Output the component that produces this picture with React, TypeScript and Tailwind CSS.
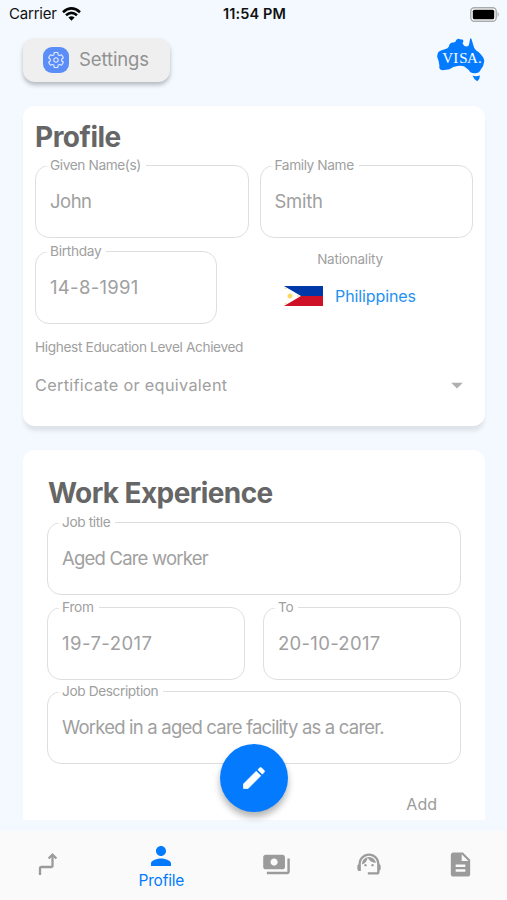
import type { ReactNode } from 'react';
import { MdArrowDropDown, MdDescription, MdPayments, MdPerson, MdSupportAgent } from 'react-icons/md';
import { IoSettingsOutline } from 'react-icons/io5';

type FieldProps = {
    label: string;
    value: string;
    className?: string;
    labelClass?: string;
    valueClass?: string;
};

function Field({ label, value, className = '', labelClass = '', valueClass = '' }: FieldProps) {
    return (
        <fieldset className={`h-[73px] min-w-0 rounded-[14px] border border-[#dedede] pl-[9px] ${className}`}>
            <legend className={`h-px whitespace-nowrap px-[5px] text-[13.7px] leading-[1px] text-[#a0a0a0] ${labelClass}`}>
                {label}
            </legend>
            <div className={`whitespace-nowrap pl-[5px] pt-[21px] text-[18.5px] leading-7 text-[#a0a0a0] ${valueClass}`}>
                {value}
            </div>
        </fieldset>
    );
}

function StatusBar() {
    return (
        <div className="grid h-7 grid-cols-3 items-center pl-[9px] pr-[7px] text-[15px] text-[#111]">
            <div className="flex items-center gap-[5px]">
                <span className="tracking-[-0.2px]">Carrier</span>
                <svg width="19" height="14" viewBox="0 0 19 14">
                    <g fill="none" stroke="#050505" strokeWidth="2.6">
                        <path d="M1 5.2Q9.5 -2.4 18 5.2" />
                        <path d="M4 8.3Q9.5 3.4 15 8.3" />
                    </g>
                    <path d="M6.4 10.6Q9.5 8 12.6 10.6L9.5 13.8Z" fill="#050505" />
                </svg>
            </div>
            <span className="text-center text-[14.5px] font-semibold tracking-[0.1px]">11:54 PM</span>
            <svg className="justify-self-end" width="30" height="15" viewBox="0 0 30 15">
                <rect x="0.8" y="0.8" width="25.4" height="13.4" rx="3.5" fill="#fff" stroke="#a9abad" strokeWidth="1.4" />
                <rect x="2.8" y="2.8" width="21.4" height="9.4" rx="1.5" fill="#000" />
                <path d="M27.6 4.8Q30 7.5 27.6 10.2Z" fill="#a9abad" />
            </svg>
        </div>
    );
}

function Logo() {
    return (
        <svg width="50" height="46" viewBox="0 0 50 46">
            <path
                d="M1.5 17Q2 14.5 5 13.6L11 11.5Q13 10.5 13.5 7.5Q15 5 17.5 5.6Q19.5 5.5 20.3 3Q22 1.2 24 2.2L27 2.8Q28 4.5 26.5 6.5Q27.5 9 30.5 9.6Q33 9.5 33.3 6L34.2 1.4Q35.6 1 36.2 4.5L37.6 9Q38.2 12.5 42.5 15Q48 20 48.3 24Q48 29 44.5 33Q43 36.5 38.5 36.3Q34.5 36.5 32.8 33L30.5 31.3Q28 28.2 21.5 29Q17 29.5 13.5 32.3L6.5 33.2Q2.5 32.8 3.4 28.5Q3 24 1.2 20Z"
                fill="#047bff"
            />
            <path d="M36.5 38.6Q40 39.7 44 38.5Q44 42 41.2 44.2Q37.8 42.5 36.5 38.6Z" fill="#047bff" />
            <text x="6.3 17.3 23.2 31 42" y="25.5" fill="#fff" fontSize="15" fontFamily="'Liberation Serif', serif">
                VISA.
            </text>
        </svg>
    );
}

function Flag() {
    return (
        <svg width="39" height="20" viewBox="0 0 39 20">
            <path d="M0 0H39V10H0Z" fill="#0038a8" />
            <path d="M0 10H39V20H0Z" fill="#ce1126" />
            <path d="M0 0L17 10L0 20Z" fill="#fff" />
            <circle cx="6" cy="10" r="2" fill="#f6cf35" />
            <path
                d="M6 6.7V13.3M2.7 10H9.3M3.7 7.7L8.3 12.3M8.3 7.7L3.7 12.3"
                stroke="#f8dc70"
                strokeWidth="0.8"
            />
            <path d="M0.8 2.4h1.6M0.8 17.6h1.6M13.4 10h1.6" stroke="#f8dc70" strokeWidth="1.4" />
        </svg>
    );
}

function RouteIcon() {
    return (
        <svg className="ml-1" width="20" height="24" viewBox="0 0 20 24" fill="none" stroke="#9b9b9b" strokeWidth="2.3">
            <path d="M2 23V16.5Q2 15 3.5 15H13Q14.5 15 14.5 13.5V3" />
            <path d="M10.6 6.5L14.5 2.6L18.4 6.5" />
        </svg>
    );
}

function PencilIcon() {
    return (
        <svg width="28" height="28" viewBox="0 0 24 24" fill="currentColor" stroke="currentColor" strokeWidth="0.6" strokeLinejoin="round">
            <path d="M20.7 7C21.1 6.6 21.1 6 20.7 5.6L18.4 3.3C18 2.9 17.4 2.9 17 3.3L15.3 4.9L19.1 8.7ZM3 17.1V21H6.9L17.8 10.1L13.9 6.2Z" />
        </svg>
    );
}

function Card({ children, className = '' }: { children: ReactNode; className?: string }) {
    return <section className={`bg-white ${className}`}>{children}</section>;
}

const tabs = [
    { key: 'pathway', icon: <RouteIcon /> },
    { key: 'profile', label: 'Profile', icon: <MdPerson size={30} /> },
    { key: 'payments', icon: <MdPayments size={29} /> },
    { key: 'support', icon: <MdSupportAgent size={28} /> },
    { key: 'documents', icon: <MdDescription size={29} /> },
];

export default function App() {
    return (
        <div className="relative flex h-[900px] w-[507px] flex-col overflow-hidden bg-[#f3f9ff] font-['Inter',sans-serif]">
            <StatusBar />

            <header className="flex h-[78px] items-start justify-between pl-[23px] pr-[21px] pt-[9px]">
                <button className="mt-px flex h-11 w-[147px] items-center gap-[10px] rounded-[12px] bg-[#efefef] pl-5 text-[18.5px] text-[#929292] shadow-[0_3px_4px_rgba(0,0,0,0.25)]">
                    <span className="flex size-[26px] items-center justify-center rounded-[9px] bg-[#5b8df8] text-[#e4edff]">
                        <IoSettingsOutline size={18} />
                    </span>
                    <span className="tracking-[-0.1px]">Settings</span>
                </button>
                <Logo />
            </header>

            <main className="flex h-[714px] flex-col gap-6 overflow-hidden pl-[23px] pr-[22px]">
                <Card className="h-80 shrink-0 rounded-[12px] px-3 pt-[13px] shadow-[0_6px_4px_-1px_rgba(0,0,0,0.09)]">
                    <h2 className="h-[46px] text-[28px] font-bold leading-9 tracking-[-0.5px] text-[#666]">Profile</h2>
                    <div className="flex gap-[11px]">
                        <Field label="Given Name(s)" value="John" className="w-[214px]" labelClass="tracking-[-0.4px]" valueClass="tracking-[-0.5px]" />
                        <Field label="Family Name" value="Smith" className="w-[214px]" labelClass="tracking-[-0.4px]" valueClass="tracking-[-0.3px]" />
                    </div>
                    <div className="mt-[13px] flex">
                        <Field label="Birthday" value="14-8-1991" className="w-[182px]" labelClass="tracking-[-0.3px]" valueClass="tracking-[0.3px]" />
                        <div className="flex grow flex-col items-center pl-[10px]">
                            <div className="text-[13.5px] leading-4 tracking-[-0.2px] text-[#a0a0a0]">Nationality</div>
                            <div className="mt-[17px] flex items-center gap-3">
                                <Flag />
                                <span className="text-[16px] leading-6 tracking-[-0.1px] text-[#2491f0]">Philippines</span>
                            </div>
                        </div>
                    </div>
                    <div className="mt-[13px] text-[13.7px] leading-5 tracking-[-0.37px] text-[#a0a0a0]">Highest Education Level Achieved</div>
                    <div className="mt-[14px] flex items-center justify-between pr-[2px]">
                        <span className="text-[16.3px] leading-6 tracking-[0.3px] text-[#a0a0a0]">Certificate or equivalent</span>
                        <MdArrowDropDown size={28} className="text-[#b0b0b0]" />
                    </div>
                </Card>

                <Card className="h-[420px] shrink-0 rounded-t-[12px] px-6 pt-[25px]">
                    <h2 className="h-[47px] pl-px text-[28px] font-bold leading-9 tracking-[-0.6px] text-[#666]">Work Experience</h2>
                    <div className="flex flex-col gap-[11.5px]">
                        <Field label="Job title" value="Aged Care worker" labelClass="tracking-[-0.4px]" valueClass="tracking-[-0.8px]" />
                        <div className="flex justify-between">
                            <Field label="From" value="19-7-2017" className="w-[198px]" labelClass="tracking-[-0.3px]" valueClass="tracking-[0.45px]" />
                            <Field label="To" value="20-10-2017" className="w-[198px]" labelClass="tracking-[-0.3px]" valueClass="tracking-[0.3px]" />
                        </div>
                        <Field
                            label="Job Description"
                            value="Worked in a aged care facility as a carer."
                            labelClass="tracking-[-0.4px]"
                            valueClass="tracking-[-0.8px]"
                        />
                    </div>
                    <div className="mt-[28px] pr-6 text-right text-[16px] leading-6 text-[#9b9b9b]">Add</div>
                </Card>
            </main>

            <nav className="mt-[11px] flex grow bg-[#fafafa] pt-px text-[#9b9b9b]">
                {tabs.map((tab) =>
                    tab.label ? (
                        <div key={tab.key} className="flex grow-[3] basis-0 flex-col items-center pt-[9px] text-[#047bff]">
                            {tab.icon}
                            <span className="text-[15.5px] leading-5 tracking-[-0.2px]">{tab.label}</span>
                        </div>
                    ) : (
                        <div key={tab.key} className="flex h-16 grow-[2] basis-0 items-center justify-center">
                            {tab.icon}
                        </div>
                    )
                )}
            </nav>

            <button className="absolute left-[220px] top-[744px] flex size-[68px] items-center justify-center rounded-full bg-[#047bff] text-white shadow-[0_5px_7px_rgba(0,0,0,0.3)]">
                <PencilIcon />
            </button>
        </div>
    );
}
